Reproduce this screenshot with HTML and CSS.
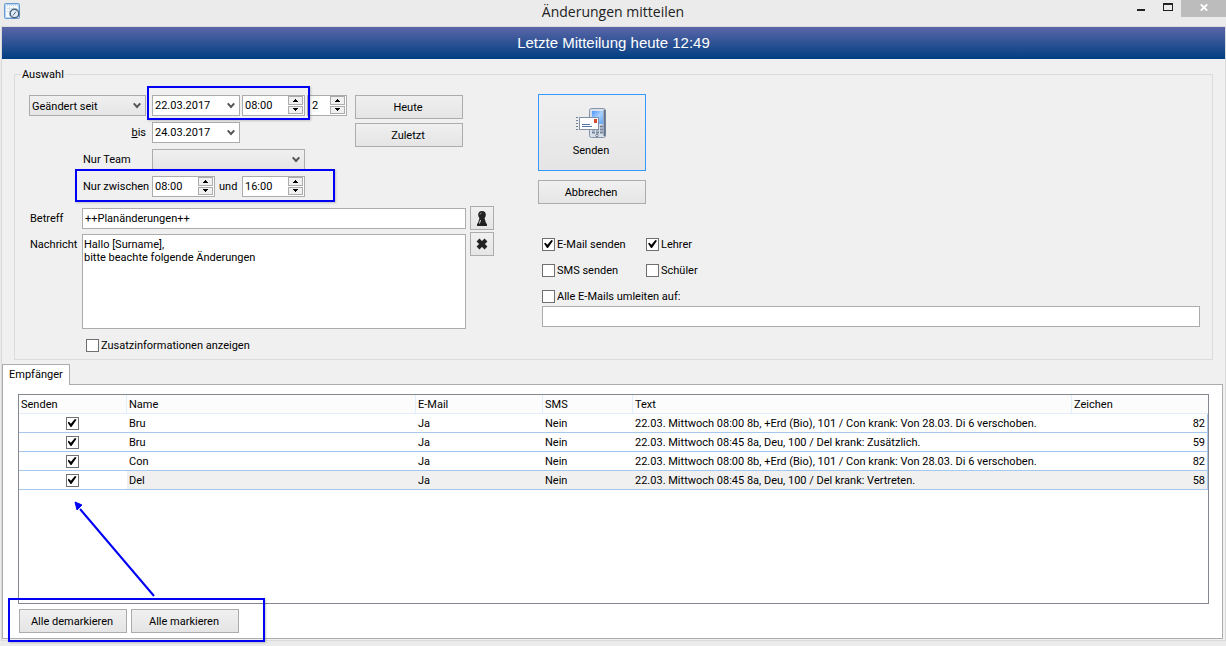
FILE: index.html
```html
<!DOCTYPE html>
<html lang="de">
<head>
<meta charset="utf-8">
<title>Änderungen mitteilen</title>
<link rel="stylesheet" href="styles.css">
</head>
<body>
<svg class="defs" aria-hidden="true">
  <symbol id="chevron" viewBox="0 0 8 7"><path d="M0.700 1.300L4 5l3.300-3.700" fill="none" stroke="#555" stroke-width="2"/></symbol>
  <symbol id="up" viewBox="0 0 5 3"><path d="M2 0h1v1h1v1h1v1H0V2h1V1h1z" fill="#000"/></symbol>
  <symbol id="down" viewBox="0 0 5 3"><path d="M0 0h5v1H4v1H3v1H2V2H1V1H0z" fill="#000"/></symbol>
</svg>
<header class="titlebar">
  <svg class="app-icon" viewBox="0 0 16 16" aria-hidden="true">
    <rect x="0.500" y="0.500" width="15" height="15" rx="1" fill="#b4d3f2" stroke="#6b9bd0"/>
    <rect x="2" y="3" width="12" height="11" fill="#f7fafc"/>
    <path d="M2 2.500h12" stroke="#fff" stroke-dasharray="1 1"/>
    <path d="M3 5.500h10M3 8.500h10M5.500 4v9M9.500 4v9" stroke="#d5dfe8"/>
    <circle cx="10.500" cy="10.500" r="4.300" fill="#e4eef7" stroke="#47647f" stroke-width="1.500"/>
    <path d="M9 12.500l3-4" stroke="#47647f"/>
  </svg>
  <h1 class="title">Änderungen mitteilen</h1>
  <div class="window-controls">
    <button class="win-btn" type="button" aria-label="Minimieren"><svg width="8" height="10" viewBox="0 0 8 10"><path d="M0 6h8v2H0z" fill="#222"/></svg></button>
    <button class="win-btn" type="button" aria-label="Maximieren"><svg width="10" height="8" viewBox="0 0 10 8"><path d="M0 0h10v8H0zM1 2v5h8V2z" fill="#222" fill-rule="evenodd"/></svg></button>
    <button class="win-btn win-close" type="button" aria-label="Schließen"><svg width="8" height="7" viewBox="0 0 8 7"><path d="M0.800 0.300l6.400 6.400M7.200 0.300L0.800 6.700" stroke="#fff" stroke-width="1.800"/></svg></button>
  </div>
</header>
<main class="window">
  <div class="banner">Letzte Mitteilung heute 12:49</div>
  <fieldset class="group">
    <legend>Auswahl</legend>
    <div class="columns">
      <div class="left">
        <div class="filters">
          <div class="fields">
            <span class="combo combo-grey since"><select aria-label="Zeitraum"><option>Geändert seit</option></select><svg class="chev" width="8" height="7"><use href="#chevron"/></svg></span>
            <span class="combo"><input type="text" value="22.03.2017" aria-label="Datum von"><button class="drop" type="button" aria-label="Kalender"><svg width="8" height="7"><use href="#chevron"/></svg></button></span>
            <span class="spin"><input type="text" value="08:00" aria-label="Uhrzeit"><span class="steps"><button type="button" aria-label="Mehr"><svg width="5" height="3"><use href="#up"/></svg></button><button type="button" aria-label="Weniger"><svg width="5" height="3"><use href="#down"/></svg></button></span></span>
            <span class="spin days"><input type="text" value="2" aria-label="Tage"><span class="steps"><button type="button" aria-label="Mehr"><svg width="5" height="3"><use href="#up"/></svg></button><button type="button" aria-label="Weniger"><svg width="5" height="3"><use href="#down"/></svg></button></span></span>

            <label class="label-end" for="until"><u>b</u>is</label>
            <span class="combo"><input id="until" type="text" value="24.03.2017"><button class="drop" type="button" aria-label="Kalender"><svg width="8" height="7"><use href="#chevron"/></svg></button></span>

            <label class="label-in" for="team">Nur Team</label>
            <span class="combo combo-grey team"><select id="team"><option></option></select><svg class="chev" width="8" height="7"><use href="#chevron"/></svg></span>

            <label class="label-in" for="from">Nur zwischen</label>
            <span class="between">
              <span class="spin"><input id="from" type="text" value="08:00"><span class="steps"><button type="button" aria-label="Mehr"><svg width="5" height="3"><use href="#up"/></svg></button><button type="button" aria-label="Weniger"><svg width="5" height="3"><use href="#down"/></svg></button></span></span>
              <label for="to">und</label>
            </span>
            <span class="spin"><input id="to" type="text" value="16:00"><span class="steps"><button type="button" aria-label="Mehr"><svg width="5" height="3"><use href="#up"/></svg></button><button type="button" aria-label="Weniger"><svg width="5" height="3"><use href="#down"/></svg></button></span></span>
          </div>
          <div class="stack">
            <button class="btn" type="button">Heute</button>
            <button class="btn" type="button">Zuletzt</button>
          </div>
        </div>
        <div class="message">
          <label for="subject">Betreff</label>
          <input id="subject" class="box" type="text" value="++Planänderungen++">
          <button class="btn icon-btn" type="button" aria-label="Platzhalter"><svg width="12" height="15" viewBox="0 0 12 15"><circle cx="6" cy="3.800" r="3.800" fill="#222"/><path d="M3 5h6L8.500 7l1.500 5 1 1v2H1v-2l1-1 1.500-5z" fill="#222"/><path d="M4.500 9l-1 3.500" stroke="#ddd"/><path d="M4 3.500Q4 2 5.500 2" stroke="#999" fill="none"/></svg></button>
          <label class="message-label" for="body">Nachricht</label>
          <textarea id="body" class="box">Hallo [Surname],
bitte beachte folgende Änderungen</textarea>
          <button class="btn icon-btn" type="button" aria-label="Löschen"><svg width="12" height="12" viewBox="0 0 12 12"><path d="M2 2l8 8M10 2l-8 8" stroke="#222" stroke-width="4"/></svg></button>
        </div>
        <label class="check extra"><input type="checkbox"><span>Zusatzinformationen anzeigen</span></label>
      </div>
      <div class="right">
        <div class="stack actions">
          <button class="btn send" type="button">
            <svg width="32" height="32" viewBox="0 0 32 32" aria-hidden="true">
              <defs><linearGradient id="scr" x2="1" y2="1"><stop stop-color="#4f97f7"/><stop offset=".5" stop-color="#a9d0ff"/><stop offset="1" stop-color="#5ea2f8"/></linearGradient></defs>
              <rect x="14.500" y="1.500" width="16" height="29" rx="2" fill="#d9dfe8" stroke="#8494ab"/>
              <path d="M29.500 3v26" stroke="#64748d" stroke-width="2"/>
              <rect x="17" y="4" width="11" height="13" fill="url(#scr)"/>
              <path d="M17 19.500h11M17 22.500h11M17 25.500h11" stroke="#74839a" stroke-width="2" stroke-dasharray="3 1"/>
              <circle cx="22" cy="28.500" r="1.200" fill="#fff" stroke="#64748d"/>
              <rect x="4.500" y="10.500" width="19" height="12" fill="#fff" stroke="#8090a8"/>
              <path d="M1 10.500h2M1 13.500h2M1 16.500h2M1 19.500h2M1 22.500h2" stroke="#74839a"/>
              <rect x="19" y="12" width="3" height="4" fill="#dc4a2c"/>
              <path d="M7 17.500h8M7 19.500h10" stroke="#5274b0"/>
            </svg>
            Senden
          </button>
          <button class="btn" type="button">Abbrechen</button>
        </div>
        <div class="options">
          <label class="check"><input type="checkbox" checked><span>E-Mail senden</span></label>
          <label class="check"><input type="checkbox" checked><span>Lehrer</span></label>
          <label class="check"><input type="checkbox"><span>SMS senden</span></label>
          <label class="check"><input type="checkbox"><span>Schüler</span></label>
          <label class="check wide"><input type="checkbox"><span>Alle E-Mails umleiten auf:</span></label>
        </div>
        <input class="box redirect" type="text" aria-label="Umleitungsadresse">
      </div>
    </div>
  </fieldset>
  <div class="tabs" role="tablist"><button class="tab" type="button" role="tab" aria-selected="true">Empfänger</button></div>
  <section class="panel">
    <div class="grid-box">
      <table>
        <colgroup><col class="c-send"><col class="c-name"><col class="c-mail"><col class="c-sms"><col><col class="c-count"></colgroup>
        <thead><tr><th>Senden</th><th>Name</th><th>E-Mail</th><th>SMS</th><th>Text</th><th>Zeichen</th></tr></thead>
        <tbody>
          <tr><td><input type="checkbox" checked aria-label="Bru"></td><td>Bru</td><td>Ja</td><td>Nein</td><td>22.03. Mittwoch 08:00 8b, +Erd (Bio), 101 / Con krank: Von 28.03. Di 6 verschoben.</td><td>82</td></tr>
          <tr><td><input type="checkbox" checked aria-label="Bru"></td><td>Bru</td><td>Ja</td><td>Nein</td><td>22.03. Mittwoch 08:45 8a, Deu, 100 / Del krank: Zusätzlich.</td><td>59</td></tr>
          <tr><td><input type="checkbox" checked aria-label="Con"></td><td>Con</td><td>Ja</td><td>Nein</td><td>22.03. Mittwoch 08:00 8b, +Erd (Bio), 101 / Con krank: Von 28.03. Di 6 verschoben.</td><td>82</td></tr>
          <tr class="current"><td><input type="checkbox" checked aria-label="Del"></td><td>Del</td><td>Ja</td><td>Nein</td><td>22.03. Mittwoch 08:45 8a, Deu, 100 / Del krank: Vertreten.</td><td>58</td></tr>
        </tbody>
      </table>
    </div>
    <div class="bulk">
      <button class="btn" type="button">Alle demarkieren</button>
      <button class="btn" type="button">Alle markieren</button>
    </div>
  </section>
</main>
<div class="mark mark-date"></div>
<div class="mark mark-between"></div>
<div class="mark mark-bulk"></div>
<svg class="arrow" width="84" height="98" viewBox="0 0 84 98" aria-hidden="true"><path d="M81 95L7 8" stroke="#0000f5" stroke-width="2"/><path d="M2 1l7 3-5 5z" fill="#0000f5" stroke="#0000f5"/></svg>
</body>
</html>
```

FILE: styles.css
```css
* { box-sizing: border-box; }

body {
  position: relative;
  display: flex;
  flex-direction: column;
  min-height: 100vh;
  margin: 0;
  background: #ebebeb;
  color: #000;
  font: 11px/14px Roboto, Tahoma, sans-serif;
}

button, input, select, textarea { font: inherit; color: inherit; margin: 0; border-radius: 0; }
svg { display: block; flex: none; }
.defs { position: absolute; width: 0; height: 0; }

/* Title bar */
.titlebar {
  display: grid;
  grid-template-columns: 1fr auto 1fr;
  align-items: start;
  height: 26px;
}
.app-icon { width: 16px; height: 16px; margin: 3px 4px; }
.title { margin: 0; font: 14px/24px "Open Sans", sans-serif; color: #222; }
.window-controls { display: flex; justify-content: flex-end; }
.win-btn {
  display: flex;
  justify-content: center;
  width: 27px;
  height: 17px;
  padding: 3px 0 0;
  border: 0;
  background: none;
}
.win-close { width: 45px; padding-top: 4px; background: #bcbcbc; }

/* Window body */
.window {
  display: flex;
  flex: 1;
  flex-direction: column;
  margin: 0 0 5px 1px;
  border: 1px solid #dadada;
  background: #f0f0f0;
}
.banner {
  height: 32px;
  background: linear-gradient(#5b66a8, #003f82);
  color: #fff;
  font: 15px/32px "Liberation Sans", Arial, sans-serif;
  text-align: center;
}

.group {
  min-width: 0;
  margin: 8px 12px 0;
  padding: 0 12px 7px 14px;
  border: 1px solid #dcdcdc;
}
.group legend { margin-left: -8px; padding: 1px 1px 0; }
.columns { display: flex; gap: 44px; padding-top: 12px; }
.right { flex: 1; min-width: 0; }
.left { padding-top: 1px; }

/* Buttons */
.btn {
  width: 108px;
  height: 24px;
  padding: 1px 2px 0 0;
  border: 1px solid #acacac;
  background: linear-gradient(#f0f0f0, #e5e5e5);
}
.stack { display: flex; flex-direction: column; gap: 4px; }
.icon-btn { display: flex; align-items: center; justify-content: center; width: 24px; padding: 0; }
.actions { gap: 9px; }
.send {
  display: flex;
  flex-direction: column;
  align-items: center;
  justify-content: center;
  gap: 5px;
  height: 77px;
  padding-top: 0;
  border-color: #3399ff;
}

/* Filter fields */
.filters { display: flex; gap: 8px; }
.fields {
  display: grid;
  grid-template-columns: 121px 88px 63px 40px;
  grid-auto-rows: 21px;
  gap: 6px 2px;
  align-items: center;
}
.combo, .spin {
  display: flex;
  height: 21px;
  min-width: 0;
  border: 1px solid #acacac;
  background: #fff;
}
.combo input, .spin input {
  flex: 1;
  min-width: 0;
  width: 0;
  padding: 0 2px;
  border: 0;
  background: none;
  outline: 0;
}
.days input { padding-left: 4px; }
.drop { display: flex; align-items: center; justify-content: center; width: 16px; padding: 0; border: 0; background: none; }
.combo-grey { display: grid; align-items: center; background: linear-gradient(#f0f0f0, #e5e5e5); }
.combo-grey select {
  grid-area: 1 / 1;
  width: 100%;
  height: 19px;
  padding: 2px 2px 0;
  border: 0;
  background: none;
  appearance: none;
}
.since, .label-end { margin-right: 4px; }
.chev { grid-area: 1 / 1; justify-self: end; margin-right: 4px; pointer-events: none; }
.steps { display: grid; gap: 1px; width: 16px; padding: 0 1px 1px 0; }
.steps button {
  display: flex;
  align-items: center;
  justify-content: center;
  padding: 0;
  border: 1px solid #acacac;
  background: #f0f0f0;
}
.label-end { text-align: right; }
.label-in { grid-column: 1; padding: 1px 0 0 54px; white-space: nowrap; }
.team { grid-column: 2 / 4; }
.between { display: flex; align-items: center; gap: 4px; }
.between .spin { width: 63px; }

/* Message */
.message {
  display: grid;
  grid-template-columns: 53px 384px 28px;
  row-gap: 2px;
  align-items: center;
  justify-content: start;
  margin-top: 9px;
}
.message label { padding: 2px 0 0 1px; }
.message .icon-btn { margin-left: 4px; align-self: start; }
.message .message-label { align-self: start; padding-top: 6px; }
.box { width: 100%; height: 21px; padding: 0 2px; border: 1px solid #acacac; background: #fff; }
textarea.box { display: block; height: 95px; margin-top: 2px; padding: 3px 1px; line-height: 13px; resize: none; }

/* Tick boxes */
input[type="checkbox"] {
  display: grid;
  place-items: center;
  flex: none;
  width: 13px;
  height: 13px;
  border: 1px solid #707070;
  background: #fff;
  appearance: none;
}
input[type="checkbox"]:checked::before {
  content: "";
  width: 9px;
  height: 8px;
  background: #000;
  clip-path: polygon(0 45%, 15% 35%, 38% 60%, 82% 0, 100% 8%, 44% 100%, 34% 100%);
}
.check { display: flex; align-items: center; gap: 2px; height: 14px; white-space: nowrap; }
.check span { padding-top: 2px; }
.extra { margin: 9px 0 0 57px; }
.options { display: grid; grid-template-columns: 104px 1fr; row-gap: 12px; margin: 33px 0 3px 4px; }
.options .wide { grid-column: 1 / 3; }
.redirect { display: block; width: calc(100% - 4px); margin-left: 4px; }

/* Recipients */
.tabs { display: flex; margin-top: 4px; }
.tab {
  position: relative;
  height: 21px;
  margin-bottom: -1px;
  padding: 0 6px;
  border: 1px solid #acacac;
  border-bottom: 0;
  background: #fff;
}
.panel {
  display: flex;
  flex: 1;
  flex-direction: column;
  margin: 0 2px 1px 0;
  padding: 9px 13px 5px 15px;
  border: 1px solid #acacac;
  background: #fff;
}
.grid-box { flex: 1; border: 1px solid #828790; }
.bulk { display: flex; gap: 4px; padding: 5px 1px 0; }

table { width: 100%; border-collapse: separate; border-spacing: 0; table-layout: fixed; }
.c-send { width: 108px; }
.c-name { width: 289px; }
.c-mail { width: 127px; }
.c-sms { width: 90px; }
.c-count { width: 136px; }
th, td { height: 19px; padding: 2px 2px 0; text-align: left; white-space: nowrap; line-height: 14px; }
th { border-right: 1px solid #e3eefb; border-bottom: 1px solid #e3eefb; background: #fcfcfc; font-weight: normal; }
th:last-child { border-right: 0; }
td { border-bottom: 1px solid #a6c8ee; }
td:first-child { padding: 0 2px 0 0; }
td:last-child { text-align: right; border-right: 1px solid #a6c8ee; }
td input[type="checkbox"] { margin: 0 auto; }
.current td:not(:first-child) { background: #f0f0f0; }

/* Highlights drawn over the window */
.mark { position: absolute; border: 2px solid #0000f5; box-shadow: 1px 1px 2px #0003; pointer-events: none; }
.mark-date { left: 147px; top: 86px; width: 163px; height: 34px; }
.mark-between { left: 75px; top: 169px; width: 260px; height: 33px; }
.mark-bulk { left: 8px; bottom: 4px; width: 257px; height: 44px; }
.arrow { position: absolute; left: 73px; bottom: 47px; pointer-events: none; }
```
